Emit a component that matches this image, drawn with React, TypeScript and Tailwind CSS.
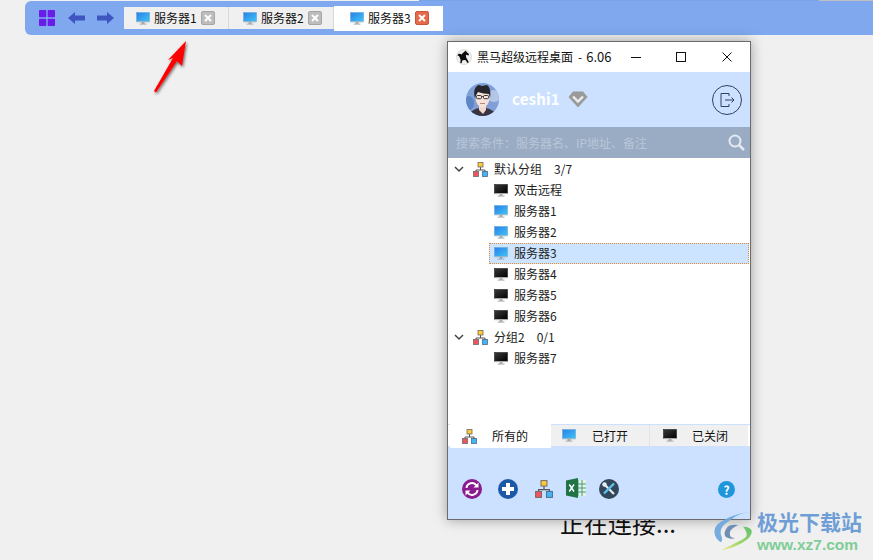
import React from "react";

const font = { fontFamily: '"Noto Sans CJK SC", "Liberation Sans", sans-serif' };

function Monitor({ dark = false }: { dark?: boolean }) {
  const id = dark ? "md" : "mb";
  return (
    <svg width="14" height="13" viewBox="0 0 14 13" className="shrink-0">
      <defs>
        <linearGradient id={id} x1="0" y1="0" x2="1" y2="1">
          {dark ? <stop offset="0" stopColor="#3a3a3a" /> : <stop offset="0" stopColor="#2a7fe8" />}
          {dark ? <stop offset="1" stopColor="#000000" /> : <stop offset="1" stopColor="#3fc4f5" />}
        </linearGradient>
      </defs>
      <rect x="0.5" y="0.5" width="13" height="9" fill={`url(#${id})`} stroke={dark ? "#222" : "#6aa7d8"} strokeWidth="0.6" />
      <rect x="0.5" y="9.3" width="13" height="1" fill={dark ? "#d8d8d8" : "#9fb8c8"} />
      <rect x="5.5" y="10.3" width="3" height="1.4" fill="#8a9299" />
      <rect x="3.5" y="11.6" width="7" height="1" fill="#a7adb2" />
    </svg>
  );
}

function Network({ size = 15 }: { size?: number }) {
  return (
    <svg width={size} height={size} viewBox="0 0 15 15" className="block shrink-0">
      <path d="M7.5 5v3M3 10V8h9v2" fill="none" stroke="#555" strokeWidth="1" />
      <rect x="5" y="0.5" width="5" height="4.5" fill="#ffc933" stroke="#6b6b6b" strokeWidth="0.8" />
      <rect x="0.5" y="9.5" width="5" height="5" fill="#f2535e" stroke="#6b6b6b" strokeWidth="0.8" />
      <rect x="9.5" y="9.5" width="5" height="5" fill="#45b4f5" stroke="#4a6a8a" strokeWidth="0.8" />
    </svg>
  );
}

function Chevron() {
  return (
    <svg width="10" height="7" viewBox="0 0 10 7" className="shrink-0">
      <path d="M1 1l4 4 4-4" fill="none" stroke="#444" strokeWidth="1.5" />
    </svg>
  );
}

function Close({ active = false }: { active?: boolean }) {
  return (
    <span className={`flex h-[14px] w-[14px] items-center justify-center rounded-[2px] border ${active ? "border-[#c9563a] bg-[#e8694a]" : "border-[#a5a5a5] bg-[#bdbdbd]"}`}>
      <svg width="8" height="8" viewBox="0 0 8 8">
        <path d="M1 1l6 6M7 1l-6 6" stroke="#fff" strokeWidth="2" />
      </svg>
    </span>
  );
}

function Tab({ label, cls, active = false }: { label: string; cls: string; active?: boolean }) {
  return (
    <div className={`flex items-center ${cls}`}>
      <Monitor />
      <span className="ml-[4px] text-[12px] leading-none text-[#111]">{label}</span>
      <span className="ml-[4px]"><Close active={active} /></span>
    </div>
  );
}

function Group({ label, count }: { label: string; count: string }) {
  return (
    <div className="flex h-[21px] items-center pl-[6px]">
      <Chevron />
      <span className="ml-[9px]"><Network /></span>
      <span className="ml-[6px] pb-[2px] text-[12px] leading-none text-[#222]">{label}</span>
      <span className="ml-[12px] pb-[2px] text-[12px] leading-none text-[#222]">{count}</span>
    </div>
  );
}

function Row({ label, dark = false, selected = false }: { label: string; dark?: boolean; selected?: boolean }) {
  return (
    <div className={`ml-[41px] flex h-[21px] items-center ${selected ? "border border-dotted border-[#e08a3c] bg-[#cce4ff] pl-[4px]" : "pl-[5px]"}`}>
      <Monitor dark={dark} />
      <span className="ml-[6px] pb-[2px] text-[12px] leading-none text-[#222]">{label}</span>
    </div>
  );
}

function Avatar() {
  return (
    <svg width="33" height="33" viewBox="0 0 33 33" className="shrink-0">
      <defs>
        <clipPath id="av"><circle cx="16.5" cy="16.5" r="16.5" /></clipPath>
      </defs>
      <g clipPath="url(#av)">
        <rect width="33" height="33" fill="#7f9fd6" />
        <ellipse cx="28" cy="13" rx="7" ry="6" fill="#b4c6e6" />
        <ellipse cx="3" cy="20" rx="5" ry="7" fill="#5f86c4" />
        <path d="M3 33c2-6 6-7 10-8h7c4 1 8 2 10 8z" fill="#3a3440" />
        <path d="M13 22h7v5l-3 4-4-4z" fill="#f0d8cc" />
        <ellipse cx="16.500" cy="15.500" rx="6.800" ry="9" fill="#f6e2d8" />
        <path d="M9 15C7 8 9 3 13 2l3 1 5-1c3 2 4 7 3 13l-1-4c-3 0-8-1-11-2-1 1-2 3-3 6z" fill="#26262c" />
        <rect x="10.500" y="12.500" width="5" height="3.200" rx="1" fill="none" stroke="#222" strokeWidth="0.900" />
        <rect x="17.500" y="12.500" width="5" height="3.200" rx="1" fill="none" stroke="#222" strokeWidth="0.900" />
        <path d="M15.500 13.500h2" stroke="#222" strokeWidth="0.800" />
        <path d="M14 20.500h5" stroke="#a8706a" strokeWidth="0.800" />
      </g>
    </svg>
  );
}

function Horse() {
  return (
    <svg width="16" height="16" viewBox="0 0 16 16" className="shrink-0">
      <circle cx="8" cy="8" r="7.600" fill="#eeeeee" stroke="#c8c8c8" strokeWidth="0.500" />
      <path d="M1.500 6.500C2 4.500 4 4 5.500 5.500 7 4 8.500 2 10 1.500l.5 1.500 2.500 2-.5 1.500-2.500-.8c-.3 1.800.3 3.500 1.500 5l1.300 2.500-1.300.8-2-3-3 .3-1 3-1.300-.3.500-3.300C3.500 9 4.300 7.300 1.500 6.500z" fill="#0c0c0c" />
    </svg>
  );
}

function Diamond() {
  return (
    <svg width="20" height="17" viewBox="0 0 20 17" className="shrink-0">
      <path d="M5 .5h10l4.500 5.500L10 16.500.5 6z" fill="#9a9a9a" />
      <path d="M5 5.500l5 5 5-5" fill="none" stroke="#ececec" strokeWidth="2.400" />
    </svg>
  );
}

function BottomTab({ label, cls, labelCls, dark, network }: { label: string; cls: string; labelCls: string; dark?: boolean; network?: boolean }) {
  return (
    <div className={`flex items-center ${cls}`}>
      {network ? <Network /> : <Monitor dark={dark} />}
      <span className={`text-[12px] text-[#111] ${labelCls}`}>{label}</span>
    </div>
  );
}

export default function App() {
  return (
    <div style={font} className="relative h-[560px] w-[873px] overflow-hidden bg-[#f0f0f0]">
      <div className="flex h-[1px]">
        <div className="w-[419px] bg-[#f0f0f0]" />
        <div className="w-[400px] bg-[#79a3e8]" />
        <div className="flex-1 bg-[#c0c0c0]" />
      </div>
      <div className="ml-[25px] flex h-[34px] items-center rounded-bl-[6px] rounded-tl-[6px] bg-[#7fa8ef] pl-[14px]">
        <svg width="16" height="16" viewBox="0 0 16 16" className="shrink-0">
          <g fill="#6a1de8">
            <rect x="0" y="0" width="7.300" height="7.300" rx="0.800" />
            <rect x="8.700" y="0" width="7.300" height="7.300" rx="0.800" />
            <rect x="0" y="8.700" width="7.300" height="7.300" rx="0.800" />
            <rect x="8.700" y="8.700" width="7.300" height="7.300" rx="0.800" />
          </g>
        </svg>
        <svg width="17" height="12" viewBox="0 0 17 12" className="ml-[13px] shrink-0">
          <path d="M0 6l7-6v3.500h10v5H7V12z" fill="#3f55c0" />
        </svg>
        <svg width="17" height="12" viewBox="0 0 17 12" className="ml-[12px] shrink-0">
          <path d="M17 6l-7-6v3.500H0v5h10V12z" fill="#3f55c0" />
        </svg>
        <div className="ml-[10px] flex items-center">
          <Tab label="服务器1" cls="h-[22px] w-[105px] border-r border-[#d8d8d8] bg-[#f0f0f0] pl-[12px]" />
          <Tab label="服务器2" cls="h-[22px] w-[105px] border-r border-[#d8d8d8] bg-[#f0f0f0] pl-[14px]" />
          <Tab label="服务器3" active cls="h-[25px] w-[109px] bg-white pl-[16px]" />
        </div>
      </div>

      <svg width="50" height="64" viewBox="0 0 50 64" className="absolute left-[145px] top-[37px]">
        <defs>
          <filter id="sh" x="-30%" y="-30%" width="160%" height="160%">
            <feDropShadow dx="1" dy="1.500" stdDeviation="1.500" floodColor="#000" floodOpacity="0.6" />
          </filter>
        </defs>
        <path d="M41 4 37 29l-5-5L11 55.500 9 54 28 21l-5 2z" fill="#ff0000" filter="url(#sh)" />
      </svg>

      <div className="absolute left-[560px] top-[506px] text-[24px] leading-[34px] text-[#111]">正在连接...</div>

      <div className="absolute left-[447px] top-[41px] flex h-[479px] w-[304px] flex-col border border-[#6b6b6b] bg-white shadow-[0_0_12px_rgba(0,0,0,0.35)]">
        <div className="flex h-[30px] shrink-0 items-center pl-[8px] pr-[18px]">
          <Horse />
          <span className="ml-[5px] text-[12px] text-[#111]">黑马超级远程桌面</span>
          <span className="ml-[5px] text-[12px] text-[#111]">-</span>
          <span className="ml-[4px] text-[13px] text-[#111]">6.06</span>
          <svg width="10" height="1" viewBox="0 0 10 1" className="ml-auto shrink-0"><path d="M0 .5h10" stroke="#111" /></svg>
          <svg width="10" height="10" viewBox="0 0 10 10" className="ml-[35px] shrink-0"><rect x=".5" y=".5" width="9" height="9" fill="none" stroke="#111" /></svg>
          <svg width="10" height="10" viewBox="0 0 10 10" className="ml-[36px] shrink-0"><path d="M.5.5l9 9M9.500.5l-9 9" stroke="#111" /></svg>
        </div>
        <div className="flex h-[55px] shrink-0 items-center bg-[#cbe1ff] pl-[18px] pr-[8px]">
          <Avatar />
          <span className="ml-[13px] text-[15px] font-bold tracking-[0.2px] text-white">ceshi1</span>
          <span className="ml-[8px]"><Diamond /></span>
          <span className="ml-auto flex h-[30px] w-[30px] items-center justify-center rounded-full border border-[#33405c]">
            <svg width="16" height="16" viewBox="0 0 16 16">
              <path d="M10 4V1.500H2v13h8V12" fill="none" stroke="#33405c" strokeWidth="1" />
              <path d="M6 8h9M12.500 5.500 15 8l-2.500 2.500" fill="none" stroke="#33405c" strokeWidth="1" />
            </svg>
          </span>
        </div>
        <div className="flex h-[31px] shrink-0 items-center bg-[#9aacc4] pl-[8px] pr-[5px]">
          <span className="text-[12px] text-[#b9c6d8]">搜索条件：服务器名、IP地址、备注</span>
          <svg width="17" height="17" viewBox="0 0 17 17" className="ml-auto shrink-0">
            <circle cx="7" cy="7" r="5.500" fill="none" stroke="#e4eaf2" strokeWidth="2" />
            <path d="M11 11l5 5" stroke="#e4eaf2" strokeWidth="2.500" />
          </svg>
        </div>
        <div className="min-h-0 flex-1 pr-[1px] pt-[1px]">
          <Group label="默认分组" count="3/7" />
          <Row label="双击远程" dark />
          <Row label="服务器1" />
          <Row label="服务器2" />
          <Row label="服务器3" selected />
          <Row label="服务器4" dark />
          <Row label="服务器5" dark />
          <Row label="服务器6" dark />
          <Group label="分组2" count="0/1" />
          <Row label="服务器7" dark />
        </div>
        <div className="relative z-10 flex h-[22px] shrink-0 items-start border-t border-[#cbe1ff] pl-[2px]">
          <BottomTab label="所有的" network cls="mt-[-1px] h-[24px] w-[101px] bg-white pl-[12px]" labelCls="ml-[15px]" />
          <BottomTab label="已打开" cls="h-[21px] w-[99px] border-r border-[#dfe4ea] bg-[#f0f0f0] pl-[11px]" labelCls="ml-[16px]" />
          <BottomTab label="已关闭" dark cls="h-[21px] w-[98px] bg-[#f0f0f0] pl-[13px]" labelCls="ml-[15px]" />
        </div>
        <div className="flex h-[73px] shrink-0 items-start bg-[#cbe1ff] pl-[14px] pr-[15px] pt-[33px]">
          <svg width="20" height="20" viewBox="0 0 20 20" className="shrink-0">
            <circle cx="10" cy="10" r="10" fill="#8b1a8f" />
            <path d="M4.500 9A5.500 5.500 0 0 1 14.500 6.500M15.500 11A5.500 5.500 0 0 1 5.500 13.500" fill="none" stroke="#fff" strokeWidth="2" />
            <path d="M16.500 3.500v5h-5zM3.500 16.500v-5h5z" fill="#fff" />
          </svg>
          <svg width="20" height="20" viewBox="0 0 20 20" className="ml-[16px] shrink-0">
            <circle cx="10" cy="10" r="10" fill="#1d5aa6" />
            <path d="M10 4v12M4 10h12" stroke="#fff" strokeWidth="4" />
          </svg>
          <span className="ml-[17px] mt-[1px]"><Network size={18} /></span>
          <svg width="20" height="20" viewBox="0 0 20 20" className="ml-[13px] mt-[-1px] shrink-0">
            <rect x="10" y="2" width="10" height="16" fill="#e4f1ea" />
            <path d="M12 2v16M16 2v16M10 6h10M10 10h10M10 14h10" stroke="#3a9467" strokeWidth="0.900" />
            <path d="M0 2.500 12 0v20L0 17.500z" fill="#1f7346" />
            <path d="M3.300 6.500 8 13.500M8 6.500l-4.700 7" stroke="#fff" strokeWidth="1.500" />
          </svg>
          <svg width="20" height="20" viewBox="0 0 20 20" className="ml-[13px] shrink-0">
            <circle cx="10" cy="10" r="10" fill="#33475b" />
            <path d="M6 6l9 9" stroke="#e7eef5" strokeWidth="2.200" />
            <path d="M15 4.500 5 14.500" stroke="#5cc2ec" strokeWidth="2.400" />
            <circle cx="5.500" cy="5.500" r="2.200" fill="#e7eef5" />
          </svg>
          <span className="ml-auto mt-[2px] flex h-[17px] w-[17px] items-center justify-center rounded-full bg-[#1f96dc] text-[12px] font-bold leading-none text-white">?</span>
        </div>
      </div>

      <div className="absolute left-[713px] top-[509px] flex items-start">
        <svg width="44" height="42" viewBox="0 0 44 42" className="shrink-0">
          <defs>
            <linearGradient id="lg" x1="1" y1="0" x2="0" y2="1">
              <stop offset="0" stopColor="#5fbf6e" />
              <stop offset="0.6" stopColor="#a6d96a" />
              <stop offset="1" stopColor="#f1e685" />
            </linearGradient>
          </defs>
          <path d="M38.700 2.700C26 3.500 12 9 5 15c-5 4-5 13 2 17.700 2 .8 2.500-1 1.700-5C7 24 7 19 12 15c3-3 8-5.500 10-7.300 5-3 11-4.500 16.700-5z" fill="#6fa8dc" opacity="0.950" />
          <path d="M25 16c-5-1-10 0-11.300 3C11 23 11 26 13 28c3 2 7 2 9 1-3 0-5-1-5-3-.5-2 0-4 1-5 2-2 4-3.500 7-5z" fill="#6f8fb5" />
          <path d="M30 17.700c5 0 9 2 8.700 5-.3 4-3 7-7.700 10-6 4-15 7-22.300 8.300C14 38 21 35 25 32.700c4-2 8.500-4 8.700-6.700.2-3-1.700-6-3.700-8.300z" fill="url(#lg)" />
        </svg>
        <div className="ml-[0px] flex flex-col">
          <span className="mt-[-1px] text-[21px] font-bold leading-[27px] text-[#6f9ed6]">极光下载站</span>
          <span style={{ fontFamily: '"Liberation Sans", sans-serif' }} className="mt-[1px] text-[15.500px] font-bold leading-[18px] text-[#7fcd96]">www.xz7.com</span>
        </div>
      </div>
    </div>
  );
}
